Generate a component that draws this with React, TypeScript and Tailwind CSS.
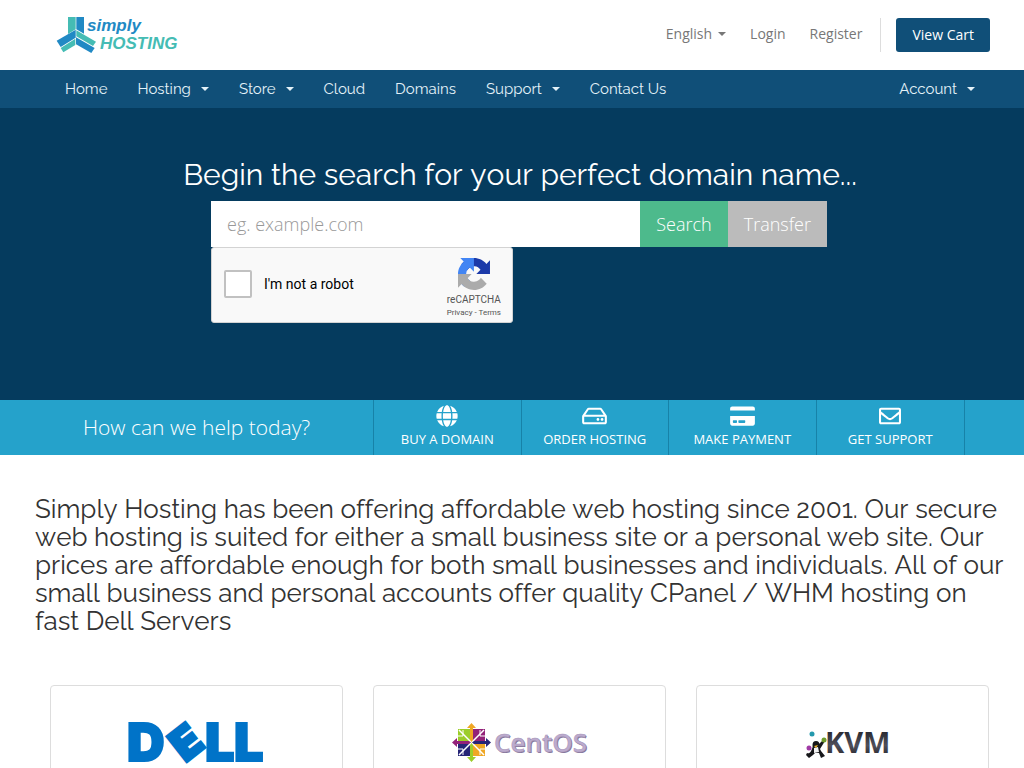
import { FaCreditCard, FaGlobe, FaRegEnvelope, FaRegHdd } from 'react-icons/fa';

const navItems = [
  { label: 'Home', menu: false },
  { label: 'Hosting', menu: true },
  { label: 'Store', menu: true },
  { label: 'Cloud', menu: false },
  { label: 'Domains', menu: false },
  { label: 'Support', menu: true },
  { label: 'Contact Us', menu: false },
];

const shortcuts = [
  { label: 'Buy a Domain', icon: FaGlobe, size: 'w-[22px]' },
  { label: 'Order Hosting', icon: FaRegHdd, size: 'w-[25px]' },
  { label: 'Make Payment', icon: FaCreditCard, size: 'w-[25px]' },
  { label: 'Get Support', icon: FaRegEnvelope, size: 'w-[22px]' },
];

const partners = [
  { name: 'Dell', logo: DellLogo },
  { name: 'CentOS', logo: CentosLogo },
  { name: 'KVM', logo: KvmLogo },
];

function Caret() {
  return <span className="inline-block border-x-4 border-t-4 border-x-transparent border-t-current align-middle" />;
}

function SimplyLogo() {
  return (
    <svg viewBox="0 0 124 40" className="block w-[124px] h-10" role="img" aria-label="Simply Hosting">
      <g transform="scale(0.3333)">
        <path d="M36 6H59V43L36 57Z" fill="#45bcb4" />
        <path d="M61 6H84V56L61 43Z" fill="#2189c4" />
        <path d="M14 99L58 71V90L22 112Z" fill="#45bcb4" />
        <path d="M2 77L59 44V68L14 96Z" fill="#2189c4" />
        <path d="M60 67L116 99L106 114L60 88Z" fill="#2189c4" />
        <path d="M61 46L120 80L111 93L61 64Z" fill="#45bcb4" />
      </g>
      <g fontFamily="Liberation Sans, sans-serif" fontWeight="700" fontStyle="italic">
        <text x="31" y="16" fontSize="17" fill="#2189c4">simply</text>
        <text x="44" y="34" fontSize="17" fill="#45bcb4">HOSTING</text>
      </g>
    </svg>
  );
}

function RecaptchaMark() {
  return (
    <svg viewBox="0 0 64 64" className="w-8 h-8" aria-hidden="true">
      <path d="M64 31.955l-.033-1.37V4.687l-7.16 7.16C50.948 4.674 42.033.093 32.05.093c-10.4 0-19.622 4.96-25.458 12.64l11.736 11.86a15.55 15.55 0 0 1 4.754-5.334c2.05-1.6 4.952-2.906 8.968-2.906.485 0 .86.057 1.135.163 4.976.393 9.288 3.14 11.828 7.124l-8.307 8.307L64 31.953" fill="#1c3aa9" />
      <path d="M31.862.094l-1.37.033H4.594l7.16 7.16C4.58 13.147 0 22.06 0 32.046c0 10.4 4.96 19.622 12.64 25.458L24.5 45.768a15.55 15.55 0 0 1-5.334-4.754c-1.6-2.05-2.906-4.952-2.906-8.968 0-.485.057-.86.163-1.135.393-4.976 3.14-9.288 7.124-11.828l8.307 8.307L31.86.095" fill="#4285f4" />
      <path d="M.001 32.045l.033 1.37v25.898l7.16-7.16c5.86 7.173 14.774 11.754 24.76 11.754 10.4 0 19.622-4.96 25.458-12.64l-11.736-11.86a15.55 15.55 0 0 1-4.754 5.334c-2.05 1.6-4.952 2.906-8.968 2.906-.485 0-.86-.057-1.135-.163-4.976-.393-9.288-3.14-11.828-7.124l8.307-8.307L.001 32.047" fill="#ababab" />
    </svg>
  );
}

function DellLogo() {
  return (
    <svg viewBox="0 -14 140 72" className="w-[140px] h-[72px]" role="img" aria-label="Dell">
      <g fontFamily="Inter, sans-serif" fontWeight="900" fill="#0073c8" stroke="#0073c8">
        <text x="0" y="40" fontSize="52" strokeWidth="2">D</text>
        <text x="58" y="42" fontSize="44" strokeWidth="3" transform="rotate(-38 58 42)">E</text>
        <text x="78" y="40" fontSize="52" strokeWidth="2">L</text>
        <text x="107" y="40" fontSize="52" strokeWidth="2">L</text>
      </g>
    </svg>
  );
}

function CentosLogo() {
  return (
    <svg viewBox="0 0 136 40" className="w-[136px] h-10" role="img" aria-label="CentOS">
      <path d="M6 6H18V18H6Z" fill="#9ccd2a" />
      <path d="M21 6H33V18H21Z" fill="#932279" />
      <path d="M6 21H18V33H6Z" fill="#262577" />
      <path d="M21 21H33V33H21Z" fill="#efa724" />
      <g stroke="#fff" strokeWidth="1.5" fill="none">
        <path d="M7 7L32 32M32 7L7 32" />
        <path d="M11 7V13H6M28 7V13H33M11 32V26H6M28 32V26H33" strokeWidth="1" />
      </g>
      <path d="M19.500 0L24 5H21V17L19.500 19L18 17V5H15Z" fill="#efa724" />
      <path d="M39 19.500L34 24V21H22L20 19.500L22 18H34V15Z" fill="#262577" />
      <path d="M19.500 39L15 34H18V22L19.500 20L21 22V34H24Z" fill="#9ccd2a" />
      <path d="M0 19.500L5 15V18H17L19 19.500L17 21H5V24Z" fill="#932279" />
      <g fontFamily="Open Sans, sans-serif" fontWeight="600" fontSize="26">
        <text x="43" y="30" fill="#85769a">CentOS</text>
        <text x="42" y="29" fill="#bcabce" stroke="#a595b8" strokeWidth="0.5">CentOS</text>
      </g>
    </svg>
  );
}

function KvmLogo() {
  return (
    <svg viewBox="-6 -5 98 42" className="w-[98px] h-[42px]" role="img" aria-label="KVM">
      <defs>
        <linearGradient id="kvm-text" x1="0" y1="0" x2="0" y2="1">
          <stop offset="0.2" stopColor="#24242b" />
          <stop offset="0.6" stopColor="#50505b" />
          <stop offset="0.9" stopColor="#24242b" />
        </linearGradient>
      </defs>
      <g transform="translate(6 0)">
        <text x="19" y="26" fontFamily="Open Sans, sans-serif" fontWeight="700" fontSize="29" fill="url(#kvm-text)">KVM</text>
        <ellipse cx="10" cy="18" rx="3.500" ry="4" fill="#17171a" />
        <path d="M7 19C5 25 4 27 1 26L0 28L3 31L7 28L9 26L13 26L15 31L19 29L15 24L14 22L19 14L17 13L12 18Z" fill="#17171a" />
        <path d="M8 21L12 20L13 25L8 26Z" fill="#f2f2f2" />
        <path d="M8 19L12 18L10 21Z" fill="#f0b32a" />
        <circle cx="6" cy="7" r="2.500" fill="#2499ad" />
        <circle cx="18" cy="13" r="2.500" fill="#6f9b2b" />
        <circle cx="3" cy="21" r="2.500" fill="#a03aa5" />
      </g>
    </svg>
  );
}

export default function App() {
  return (
    <div className="h-screen overflow-hidden bg-white font-['Open_Sans',sans-serif] text-[#333]">
      <header className="flex h-[70px] items-center justify-between pl-14 pr-[34px]">
        <a href="#home">
          <SimplyLogo />
        </a>
        <div className="flex items-center text-sm text-[#777]">
          <div className="flex items-center gap-6 pb-0.5">
            <button type="button" className="flex items-center gap-1.5">
              English <Caret />
            </button>
            <a href="#login">Login</a>
            <a href="#register">Register</a>
          </div>
          <div className="ml-[18px] border-l border-[#ddd] pl-[15px]">
            <a href="#cart" className="block rounded-[3px] bg-[#104f78] px-4 py-[7px] leading-5 text-white">View Cart</a>
          </div>
        </div>
      </header>

      <nav className="flex h-[38px] items-center justify-between bg-[#104f78] pl-[65px] pr-[49px] font-[Raleway,Lato,sans-serif] text-[15px] text-[#e4f2f8]">
        <div className="flex items-center gap-[30px]">
          {navItems.map((item) =>
            item.menu ? (
              <button key={item.label} type="button" className="flex items-center gap-2.5">
                {item.label} <Caret />
              </button>
            ) : (
              <a key={item.label} href="#menu">{item.label}</a>
            )
          )}
        </div>
        <button type="button" className="flex items-center gap-2.5">
          Account <Caret />
        </button>
      </nav>

      <section className="bg-[#053b5e] pl-[35px] pr-[19px] pt-[50px] h-[292px]">
        <h2 className="text-center font-[Raleway,Lato,sans-serif] text-[30px] leading-[33px] text-white [font-kerning:none] [font-variant-ligatures:none]">
          Begin the search for your perfect domain name...
        </h2>
        <form className="mx-auto mt-2.5 max-w-[618px] pr-0.5">
          <div className="flex h-[46px] text-lg font-light">
            <input
              type="text"
              aria-label="Domain name"
              placeholder="eg. example.com"
              className="min-w-0 flex-1 bg-white px-4 text-[#555] outline-none placeholder:text-[#999]"
            />
            <button type="submit" className="bg-[#4dba8c] px-4 text-white">Search</button>
            <button type="button" className="bg-[#bbb] px-4 text-white">Transfer</button>
          </div>
          <div className="flex h-[76px] w-[302px] items-center justify-between rounded-[3px] border border-[#d3d3d3] bg-[#f9f9f9] pl-3 pr-[11px] font-[Roboto,sans-serif]">
            <label className="flex items-center gap-3 pb-0.5 text-sm text-black">
              <input type="checkbox" className="h-7 w-7 appearance-none rounded-[2px] border-2 border-[#c1c1c1] bg-white" />
              I'm not a robot
            </label>
            <div className="flex flex-col items-center pt-2 text-[#555]">
              <RecaptchaMark />
              <span className="mt-1 text-[10px] leading-3">reCAPTCHA</span>
              <span className="text-[8px] leading-[14px]">
                <a href="#privacy">Privacy</a> - <a href="#terms">Terms</a>
              </span>
            </div>
          </div>
        </form>
      </section>

      <section className="flex h-[55px] bg-[#25a2cb] pl-[35px] text-white">
        <p className="w-[338px] pr-[15px] text-center text-[21px] font-light leading-[55px]">How can we help today?</p>
        <div className="grid w-[592px] grid-cols-4 divide-x divide-[#1782a8] border-x border-[#1782a8]">
          {shortcuts.map(({ label, icon: Icon, size }) => (
            <a key={label} href="#shortcut" className="flex flex-col items-center pt-[5px] text-[13px] uppercase leading-[18px]">
              <Icon className={`mb-[3px] h-[22px] ${size}`} />
              {label}
            </a>
          ))}
        </div>
      </section>

      <main className="pl-[35px] pr-5 pt-10">
        <h1 className="font-[Raleway,Lato,sans-serif] text-[26px] leading-7 [font-kerning:none] [font-variant-ligatures:none]">
          Simply Hosting has been offering affordable web hosting since 2001. Our secure web hosting is suited for either a small business site or a personal web site. Our prices are affordable enough for both small businesses and individuals. All of our small business and personal accounts offer quality CPanel / WHM hosting on fast Dell Servers
        </h1>
        <div className="mt-[50px] grid grid-cols-3 gap-[30px] px-[15px]">
          {partners.map(({ name, logo: Logo }) => (
            <div key={name} className="flex h-[115px] items-center justify-center rounded border border-[#ddd]">
              <Logo />
            </div>
          ))}
        </div>
      </main>
    </div>
  );
}
